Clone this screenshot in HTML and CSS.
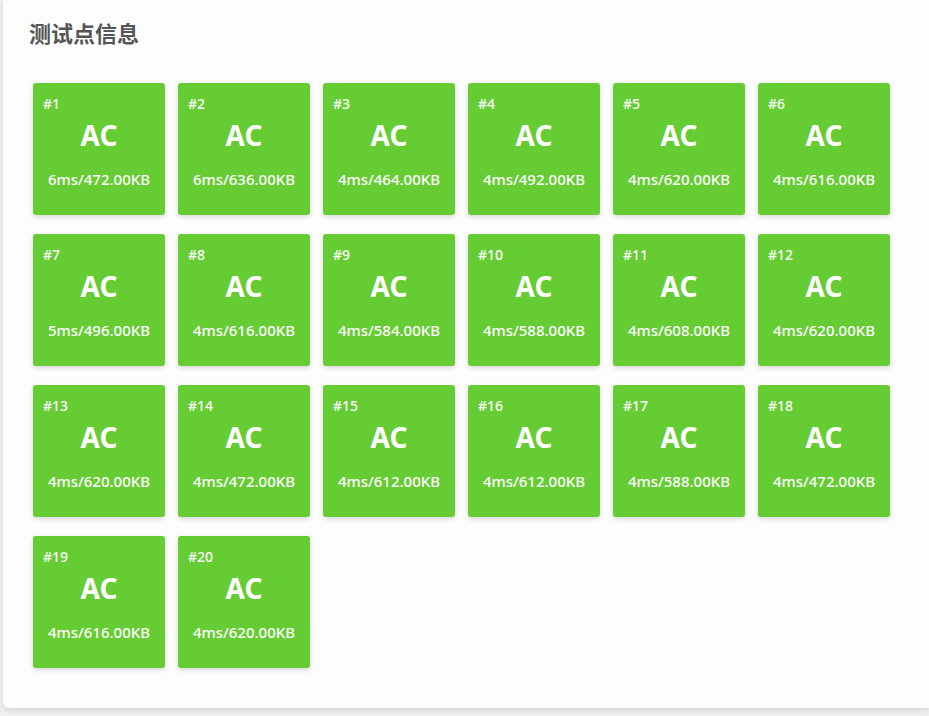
FILE: index.html
```html
<!DOCTYPE html>
<html lang="zh">
<head>
<meta charset="utf-8">
<link rel="stylesheet" href="styles.css">
</head>
<body>
<div class="card">
  <div class="title">测试点信息</div>
  <div class="grid">
    <div class="case"><div class="num">#1</div><div class="res">AC</div><div class="info">6ms/472.00KB</div></div>
    <div class="case"><div class="num">#2</div><div class="res">AC</div><div class="info">6ms/636.00KB</div></div>
    <div class="case"><div class="num">#3</div><div class="res">AC</div><div class="info">4ms/464.00KB</div></div>
    <div class="case"><div class="num">#4</div><div class="res">AC</div><div class="info">4ms/492.00KB</div></div>
    <div class="case"><div class="num">#5</div><div class="res">AC</div><div class="info">4ms/620.00KB</div></div>
    <div class="case"><div class="num">#6</div><div class="res">AC</div><div class="info">4ms/616.00KB</div></div>
    <div class="case"><div class="num">#7</div><div class="res">AC</div><div class="info">5ms/496.00KB</div></div>
    <div class="case"><div class="num">#8</div><div class="res">AC</div><div class="info">4ms/616.00KB</div></div>
    <div class="case"><div class="num">#9</div><div class="res">AC</div><div class="info">4ms/584.00KB</div></div>
    <div class="case"><div class="num">#10</div><div class="res">AC</div><div class="info">4ms/588.00KB</div></div>
    <div class="case"><div class="num">#11</div><div class="res">AC</div><div class="info">4ms/608.00KB</div></div>
    <div class="case"><div class="num">#12</div><div class="res">AC</div><div class="info">4ms/620.00KB</div></div>
    <div class="case"><div class="num">#13</div><div class="res">AC</div><div class="info">4ms/620.00KB</div></div>
    <div class="case"><div class="num">#14</div><div class="res">AC</div><div class="info">4ms/472.00KB</div></div>
    <div class="case"><div class="num">#15</div><div class="res">AC</div><div class="info">4ms/612.00KB</div></div>
    <div class="case"><div class="num">#16</div><div class="res">AC</div><div class="info">4ms/612.00KB</div></div>
    <div class="case"><div class="num">#17</div><div class="res">AC</div><div class="info">4ms/588.00KB</div></div>
    <div class="case"><div class="num">#18</div><div class="res">AC</div><div class="info">4ms/472.00KB</div></div>
    <div class="case"><div class="num">#19</div><div class="res">AC</div><div class="info">4ms/616.00KB</div></div>
    <div class="case"><div class="num">#20</div><div class="res">AC</div><div class="info">4ms/620.00KB</div></div>
  </div>
</div>
</body>
</html>
```
FILE: styles.css
```css
html, body {
  margin: 0;
  padding: 0;
  background: #f0f0f0;
  height: 716px;
  overflow: hidden;
}
body {
  font-family: "Noto Sans", "Open Sans", "Noto Sans CJK SC", sans-serif;
}
.card {
  margin: 0 0 0 3px;
  height: 708px;
  box-sizing: border-box;
  background: #fdfdfd;
  border-radius: 0 0 0 6px;
  box-shadow: 0 2px 6px rgba(0, 0, 0, 0.12);
  padding: 19px 26px 0 26px;
}
.title {
  font-family: "Noto Sans CJK SC", sans-serif;
  font-size: 22px;
  font-weight: 700;
  line-height: 26px;
  color: #555555;
  margin-bottom: 38px;
}
.grid {
  display: flex;
  flex-wrap: wrap;
  column-gap: 13px;
  row-gap: 19px;
  padding-left: 4px;
  width: 880px;
}
.case {
  width: 132px;
  height: 132px;
  box-sizing: border-box;
  background: #66cc33;
  border-radius: 3px;
  box-shadow: 0 2px 5px rgba(0, 0, 0, 0.15);
  color: #ffffff;
  padding: 12px 10px 0 10px;
  display: flex;
  flex-direction: column;
}
.num {
  font-size: 14px;
  font-weight: 500;
  line-height: 18px;
}
.res {
  text-align: center;
  font-size: 28px;
  font-weight: 700;
  line-height: 36px;
  margin-top: 4px;
}
.info {
  text-align: center;
  font-size: 15px;
  font-weight: 500;
  line-height: 18px;
  margin-top: 17px;
  white-space: nowrap;
}
```
